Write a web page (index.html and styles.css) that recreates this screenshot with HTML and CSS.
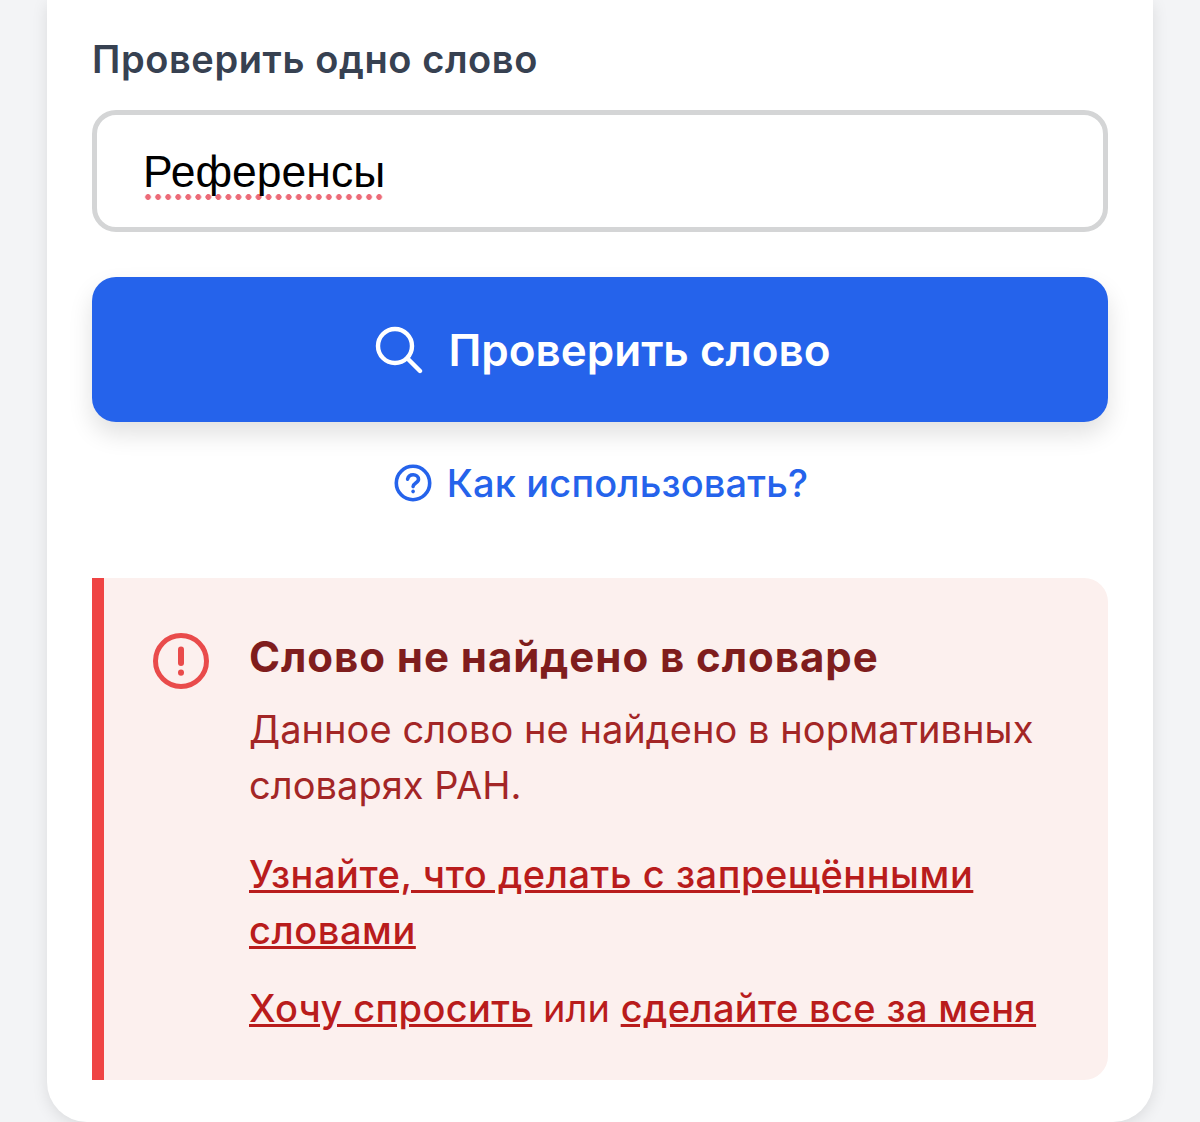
FILE: index.html
```html
<!DOCTYPE html>
<html lang="ru">
<head>
  <meta charset="UTF-8" />
  <meta name="viewport" content="width=device-width, initial-scale=1.0" />
  <title>Проверить слово</title>
  <link rel="stylesheet" href="styles.css">
</head>
<body>
  <div class="card">
    <div class="label">Проверить одно слово</div>
    <div class="word-input"><span class="misspelled">Референсы</span></div>

    <button class="check-btn">
      <svg class="search-icon" viewBox="0 0 48 48" fill="none" stroke="#fff" stroke-width="4.4" stroke-linecap="round">
        <circle cx="20" cy="20" r="17"/>
        <path d="M32.5 32.5L45 45"/>
      </svg>
      Проверить слово
    </button>

    <a class="help-link" href="#">
      <svg class="help-icon" viewBox="0 0 38 38" fill="none" stroke="#2563eb" stroke-width="3.6" stroke-linecap="round" stroke-linejoin="round">
        <circle cx="19" cy="19" r="16.7"/>
        <path d="M13.6 15.2c.6-2.8 2.8-4.4 5.6-4.4 3 0 5.3 1.8 5.3 4.4 0 3.8-5.4 3.8-5.4 7.4"/>
        <path d="M19.1 27.4v.2"/>
      </svg>
      Как использовать?
    </a>

    <div class="alert">
      <svg class="alert-icon" viewBox="0 0 56 56" fill="none" stroke="#e94b4b" stroke-width="5" stroke-linecap="round">
        <circle cx="28" cy="28" r="25.5"/>
        <path d="M28 16.5v13.5" stroke-width="6"/>
        <path d="M28 39.5v.2" stroke-width="6"/>
      </svg>
      <div class="alert-body">
        <div class="alert-title">Слово не найдено в словаре</div>
        <p class="alert-text">Данное слово не найдено в нормативных словарях РАН.</p>
        <p class="alert-link"><a href="#">Узнайте, что делать с запрещёнными словами</a></p>
        <p class="alert-last"><a href="#">Хочу спросить</a> или <a href="#">сделайте все за меня</a></p>
      </div>
    </div>
  </div>
</body>
</html>
```

FILE: styles.css
```css
* {
  box-sizing: border-box;
}

html, body {
  height: 1122px;
  overflow: hidden;
}

body {
  margin: 0;
  padding: 0 47px;
  background: #f3f4f6;
  font-family: Inter, "Noto Sans", sans-serif;
}

.card {
  background: #fff;
  border-radius: 0 0 40px 40px;
  padding: 36px 45px 42px;
  box-shadow: 0 4px 16px rgba(0, 0, 0, 0.1);
}

.label {
  font-size: 38px;
  line-height: 46px;
  font-weight: 600;
  letter-spacing: 0.6px;
  color: #374151;
  margin-bottom: 28px;
}

.word-input {
  height: 122px;
  border: 5px solid #d4d5d6;
  border-radius: 24px;
  padding: 4px 46px 0;
  display: flex;
  align-items: center;
  font-family: "Liberation Sans", sans-serif;
  font-size: 44.5px;
  color: #000;
}

.misspelled {
  padding-bottom: 3px;
  background: radial-gradient(circle, #ec6b78 2.6px, transparent 3.2px) left bottom / 10.05px 6px repeat-x;
}

.check-btn {
  width: 100%;
  height: 145px;
  margin-top: 45px;
  padding: 0 0 0 6px;
  border: none;
  border-radius: 24px;
  background: #2563eb;
  color: #fff;
  font-family: inherit;
  font-size: 44px;
  font-weight: 600;
  display: flex;
  align-items: center;
  justify-content: center;
  gap: 25px;
  box-shadow: 0 12px 24px rgba(0, 0, 0, 0.12);
}

.search-icon {
  width: 48px;
  height: 48px;
}

.help-link {
  display: flex;
  align-items: center;
  justify-content: center;
  gap: 15px;
  margin-top: 38px;
  padding-left: 2px;
  height: 46px;
  color: #2563eb;
  font-size: 38px;
  font-weight: 500;
  letter-spacing: 0.15px;
  text-decoration: none;
}

.help-icon {
  width: 38px;
  height: 38px;
}

.alert {
  display: flex;
  align-items: flex-start;
  gap: 40px;
  margin-top: 72px;
  height: 502px;
  padding: 53px 60px 0 49px;
  background: #fcf0ee;
  border-left: 12px solid #ef4444;
  border-radius: 0 24px 24px 0;
}

.alert-icon {
  width: 56px;
  height: 56px;
  margin-top: 2px;
  flex-shrink: 0;
}

.alert-body {
  color: #b91c1c;
  font-size: 38px;
  line-height: 55.5px;
  letter-spacing: 0.05px;
}

.alert-title {
  font-size: 42px;
  line-height: 52px;
  font-weight: 700;
  letter-spacing: 0.95px;
  color: #7f1d1d;
  margin-bottom: 19px;
}

.alert-body p {
  margin: 0;
}

.alert-text {
  color: #a32626;
}

.alert-link {
  margin-top: 34px !important;
}

.alert-last {
  margin-top: 23px !important;
}

.alert-body a {
  color: #b91c1c;
  font-weight: 500;
  text-decoration: underline;
}

.alert-link a {
  letter-spacing: 0.55px;
}

.alert-last a {
  letter-spacing: 0.35px;
}
```
